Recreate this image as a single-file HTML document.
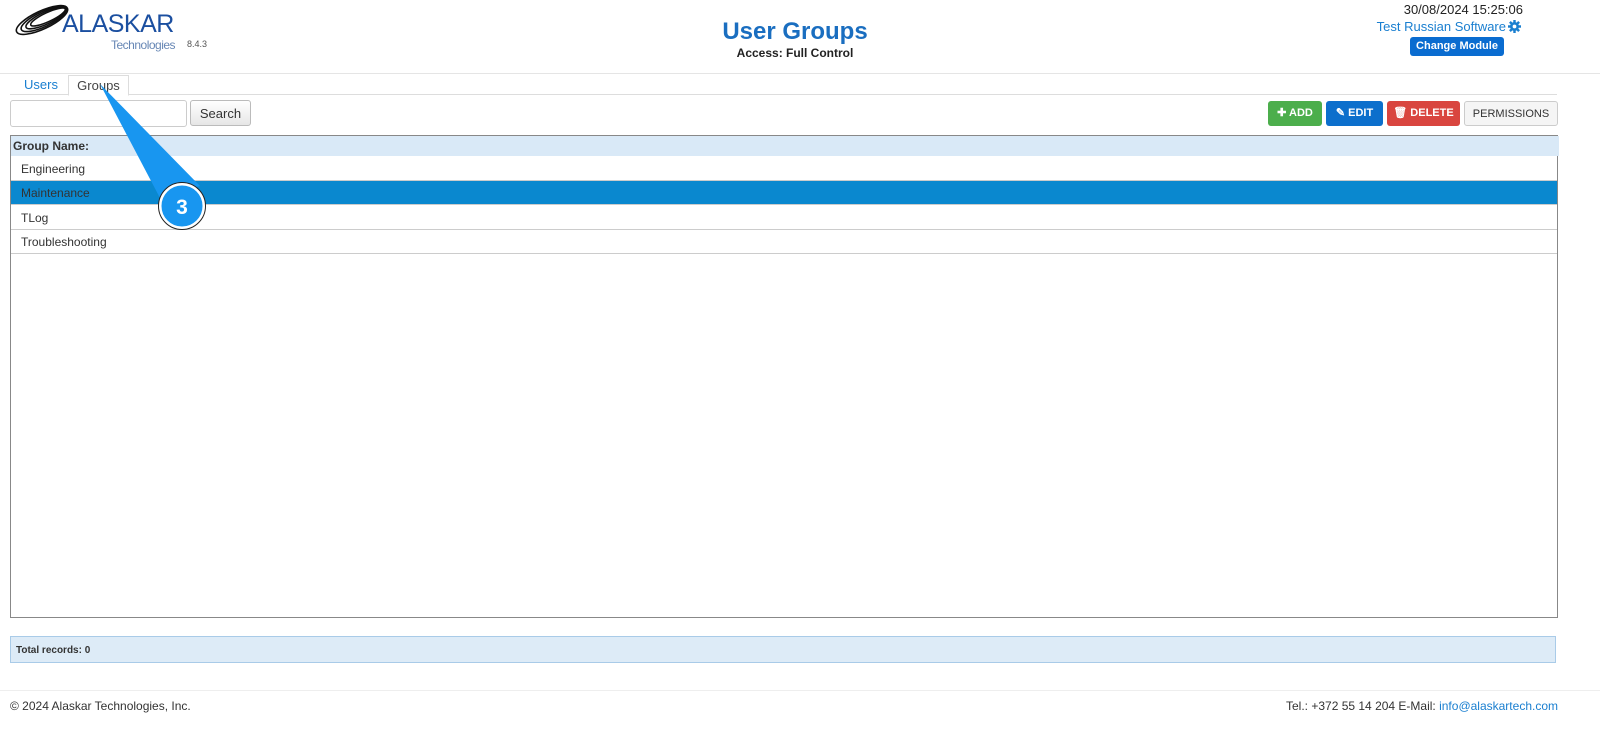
<!DOCTYPE html>
<html><head><style>
body{margin:0;width:1600px;height:732px;background:#fff;font-family:"Liberation Sans",Arial,sans-serif;position:relative;overflow:hidden}
.a{position:absolute}
.btn{position:absolute;top:101px;height:25px;border-radius:3px;font-size:11px;font-weight:bold;color:#fff;line-height:25px;text-align:center;box-sizing:border-box}
.row{position:absolute;left:11px;width:1546px;height:24px;border-bottom:1px solid #ccc;font-size:12px;line-height:24px;padding-left:10px;box-sizing:border-box;color:#333}
</style></head><body>
<svg class="a" style="left:12px;top:2px" width="60" height="38" viewBox="0 0 60 38">
<g fill="none" stroke="#111" stroke-width="1.6">
<ellipse cx="30" cy="18" rx="28" ry="9" transform="rotate(-25 30 18)"/>
<ellipse cx="32" cy="17" rx="25" ry="7.5" transform="rotate(-25 32 17)"/>
<ellipse cx="34" cy="16" rx="22" ry="6" transform="rotate(-25 34 16)"/>
<ellipse cx="36" cy="15" rx="19" ry="4.5" transform="rotate(-25 36 15)"/>
</g></svg>
<div class="a" style="left:62px;top:10px;font-size:25px;color:#1b4fa0;letter-spacing:-0.5px">ALASKAR</div>
<div class="a" style="left:111px;top:38px;font-size:12px;color:#6787b5;letter-spacing:-0.5px">Technologies</div>
<div class="a" style="left:187px;top:39px;font-size:9px;color:#555">8.4.3</div>
<div class="a" style="left:0;top:18px;width:1590px;text-align:center;font-size:24px;font-weight:bold;color:#1a6ec0">User Groups</div>
<div class="a" style="left:0;top:46px;width:1590px;text-align:center;font-size:12px;font-weight:bold;color:#222">Access: Full Control</div>
<div class="a" style="left:1360px;top:2px;width:163px;text-align:right;font-size:13px;color:#222">30/08/2024 15:25:06</div>
<div class="a" style="left:1340px;top:19px;width:166px;text-align:right;font-size:13px;color:#1a7fd0">Test Russian Software</div>
<svg class="a" style="left:1508px;top:20px" width="13" height="13" viewBox="0 0 16 16"><g fill="#1a7fd0"><circle cx="8" cy="8" r="5.5"/><rect x="6.5" y="0" width="3" height="16"/><rect x="0" y="6.5" width="16" height="3"/><rect x="6.5" y="0" width="3" height="16" transform="rotate(45 8 8)"/><rect x="6.5" y="0" width="3" height="16" transform="rotate(-45 8 8)"/></g><circle cx="8" cy="8" r="2.3" fill="#fff"/></svg>
<div class="a" style="left:1410px;top:37px;width:94px;height:19px;background:#0a6cd0;border-radius:3px;color:#fff;font-size:11px;font-weight:bold;text-align:center;line-height:19px">Change Module</div>
<div class="a" style="left:0;top:73px;width:1600px;border-top:1px solid #e5e5e5"></div>
<div class="a" style="left:10px;top:94px;width:1547px;border-top:1px solid #ddd"></div>
<div class="a" style="left:24px;top:77px;font-size:13px;color:#1a7fd0">Users</div>
<div class="a" style="left:68px;top:75px;width:59px;height:19px;border:1px solid #ddd;border-bottom:1px solid #fff;background:#fff;font-size:13px;color:#444;text-align:center;line-height:19px">Groups</div>
<div class="a" style="left:10px;top:100px;width:175px;height:25px;border:1px solid #ccc;border-radius:3px"></div>
<div class="a" style="left:190px;top:100px;width:61px;height:26px;border:1px solid #bbb;border-radius:3px;background:linear-gradient(#fff,#e6e6e6);font-size:13px;color:#333;text-align:center;line-height:26px;box-sizing:border-box">Search</div>
<div class="btn" style="left:1268px;width:54px;background:#4cae4c">✚ ADD</div>
<div class="btn" style="left:1326px;width:57px;background:#0c6fcc">✎ EDIT</div>
<div class="btn" style="left:1387px;width:73px;background:#d9453f">🗑 DELETE</div>
<div class="btn" style="left:1464px;width:94px;background:#f5f5f5;border:1px solid #ccc;color:#333;font-weight:normal">PERMISSIONS</div>
<div class="a" style="left:10px;top:135px;width:1546px;height:481px;border:1px solid #888"></div>
<div class="a" style="left:11px;top:136px;width:1546px;height:20px;background:#d9e9f7;font-size:12px;font-weight:bold;line-height:20px;padding-left:2px;color:#333">Group Name:</div>
<div class="row" style="top:157px">Engineering</div>
<div class="row" style="top:181px;background:#0a88cf;color:#333">Maintenance</div>
<div class="row" style="top:206px">TLog</div>
<div class="row" style="top:230px">Troubleshooting</div>
<div class="a" style="left:10px;top:636px;width:1546px;height:27px;background:#ddebf7;border:1px solid #a9cbe8;font-size:10px;font-weight:bold;line-height:28px;padding-left:5px;box-sizing:border-box;color:#333">Total records: 0</div>
<div class="a" style="left:0;top:690px;width:1600px;border-top:1px solid #eee"></div>
<div class="a" style="left:10px;top:699px;font-size:12px;color:#333">© 2024 Alaskar Technologies, Inc.</div>
<div class="a" style="right:42px;top:699px;font-size:12px;color:#333">Tel.: +372 55 14 204 E-Mail: <span style="color:#1a7fd0">info@alaskartech.com</span></div>
<svg class="a" style="left:0;top:0" width="300" height="260"><polygon points="100,84 160,198 200,186" fill="#1896f0"/><circle cx="182" cy="206" r="22" fill="#1896f0" stroke="#fff" stroke-width="3"/><circle cx="182" cy="206" r="23.5" fill="none" stroke="#222" stroke-width="1"/><text x="182" y="214" text-anchor="middle" font-family="Liberation Sans" font-weight="bold" font-size="21" fill="#fff">3</text></svg>
</body></html>
